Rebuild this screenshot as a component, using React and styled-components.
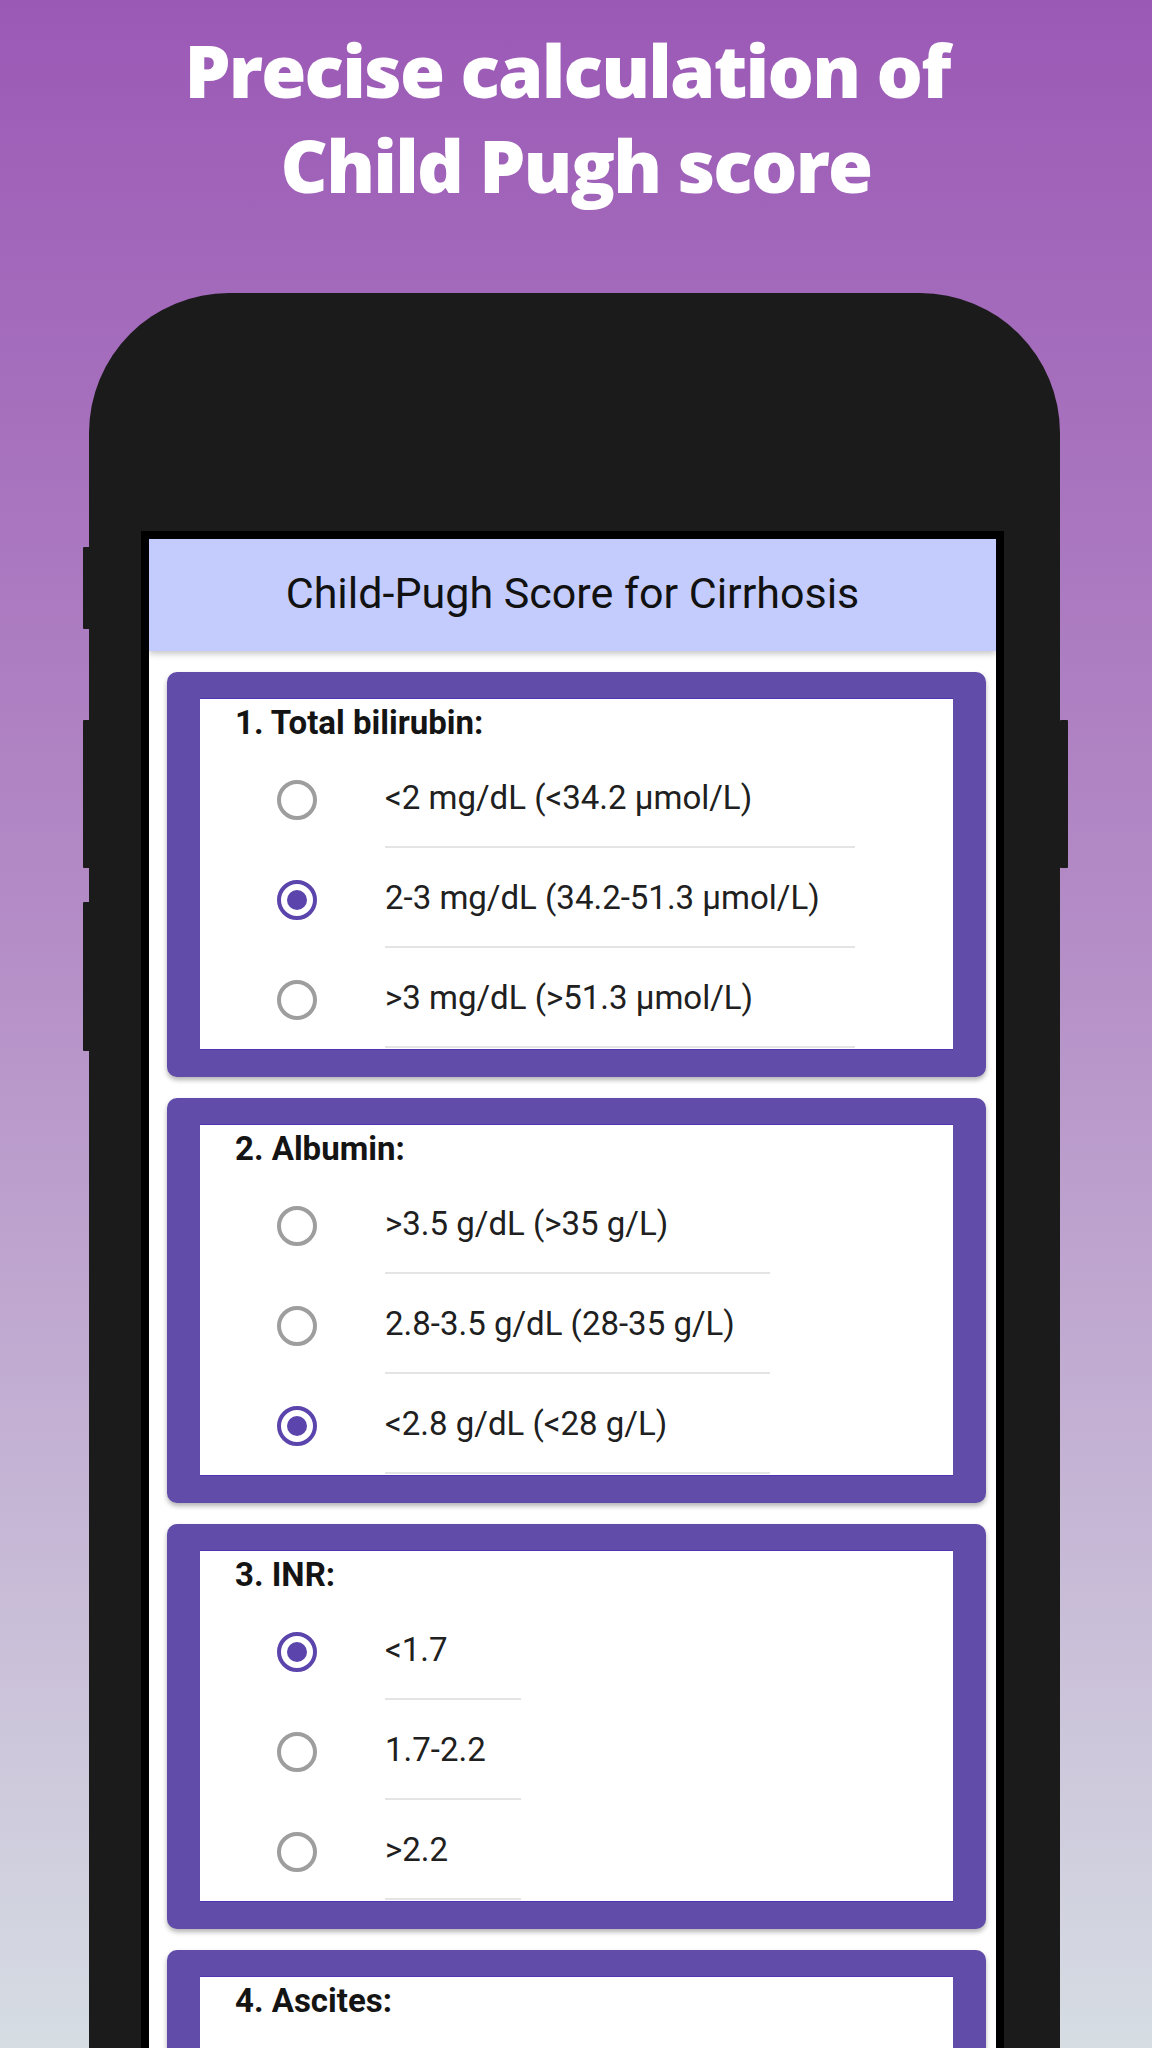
import React from 'react';
import styled, { createGlobalStyle } from 'styled-components';

const GlobalStyle = createGlobalStyle`
  html, body {
    margin: 0;
    padding: 0;
  }
  body {
    font-family: Roboto, 'Liberation Sans', sans-serif;
  }
  * {
    box-sizing: border-box;
  }
`;

const questions = [
  {
    title: '1. Total bilirubin:',
    options: ['<2 mg/dL (<34.2 μmol/L)', '2-3 mg/dL (34.2-51.3 μmol/L)', '>3 mg/dL (>51.3 μmol/L)'],
    selected: 1,
  },
  {
    title: '2. Albumin:',
    options: ['>3.5 g/dL (>35 g/L)', '2.8-3.5 g/dL (28-35 g/L)', '<2.8 g/dL (<28 g/L)'],
    selected: 2,
  },
  {
    title: '3. INR:',
    options: ['<1.7', '1.7-2.2', '>2.2'],
    selected: 0,
  },
  {
    title: '4. Ascites:',
    options: ['Absent', 'Slight', 'Moderate'],
    selected: -1,
  },
];

function App() {
  return (
    <Page>
      <GlobalStyle />
      <Headline>
        <HeadLine shift={18}>Precise calculation of</HeadLine>
        <HeadLine>Child Pugh score</HeadLine>
      </Headline>
      <Phone>
        <SideButton side="left" top={254} height={82} />
        <SideButton side="left" top={427} height={148} />
        <SideButton side="left" top={609} height={149} />
        <SideButton side="right" top={427} height={148} />
        <Screen>
          <AppBar>Child-Pugh Score for Cirrhosis</AppBar>
          <Content>
            {questions.map((q) => (
              <Card key={q.title}>
                <CardBody>
                  <QuestionTitle>{q.title}</QuestionTitle>
                  <OptionGroup>
                    {q.options.map((opt, i) => (
                      <React.Fragment key={opt}>
                        <RadioCell>
                          <Radio checked={i === q.selected} />
                        </RadioCell>
                        <OptionLabel>{opt}</OptionLabel>
                      </React.Fragment>
                    ))}
                  </OptionGroup>
                </CardBody>
              </Card>
            ))}
          </Content>
        </Screen>
      </Phone>
    </Page>
  );
}

const Page = styled.div`
  height: 2048px;
  overflow: hidden;
  display: flex;
  flex-direction: column;
  background: linear-gradient(180deg, #9b59b6 0%, #b48cc6 45%, #d6dde3 100%);
`;

const Headline = styled.h1`
  margin: 0;
  padding-top: 22px;
  display: flex;
  flex-direction: column;
  align-items: center;
  font-family: 'Open Sans', 'Noto Sans', sans-serif;
  font-weight: 800;
  font-size: 73px;
  line-height: 95px;
  letter-spacing: -1.8px;
  color: #ffffff;
`;

const HeadLine = styled.span`
  padding-right: ${(p) => p.shift || 0}px;
`;

const Phone = styled.div`
  position: relative;
  flex: 1;
  display: flex;
  flex-direction: column;
  width: 971px;
  margin: 81px 0 0 89px;
  padding: 238px 56px 0 52px;
  background: #1b1b1b;
  border-radius: 140px 140px 0 0;
`;

const SideButton = styled.div`
  position: absolute;
  top: ${(p) => p.top}px;
  height: ${(p) => p.height}px;
  width: 8px;
  ${(p) => (p.side === 'left' ? 'left: -6px;' : 'right: -8px;')}
  background: #1b1b1b;
  border-radius: 1px;
`;

const Screen = styled.div`
  flex: 1;
  display: flex;
  flex-direction: column;
  border: 8px solid #000;
  border-bottom: none;
  background: #ffffff;
`;

const AppBar = styled.div`
  position: relative;
  z-index: 1;
  height: 112px;
  display: flex;
  align-items: center;
  justify-content: center;
  background: #c3ccfd;
  box-shadow: 0 3px 6px rgba(0, 0, 0, 0.22);
  font-family: Roboto, 'Liberation Sans', sans-serif;
  font-size: 43px;
  color: #111111;
  padding-bottom: 4px;
`;

const Content = styled.div`
  padding: 21px 10px 0 18px;
`;

const Card = styled.div`
  background: #614caa;
  border-radius: 10px;
  padding: 26px 33px 27px;
  margin-bottom: 21px;
  box-shadow: 0 3px 5px rgba(0, 0, 0, 0.3);
`;

const CardBody = styled.div`
  background: #ffffff;
  padding: 4px 0 1px 35px;
  border-top: 1px solid #5233b0;
  border-bottom: 1px solid #5233b0;
`;

const QuestionTitle = styled.div`
  font-family: Roboto, 'Liberation Sans', sans-serif;
  font-weight: 700;
  font-size: 33px;
  line-height: 40px;
  color: #141414;
`;

const OptionGroup = styled.div`
  display: inline-grid;
  grid-template-columns: 40px max-content;
  column-gap: 68px;
  margin: 5px 0 0 42px;
`;

const RadioCell = styled.div`
  display: flex;
  align-items: center;
  height: 100px;
  padding-top: 3px;
`;

const Radio = styled.span`
  display: flex;
  align-items: center;
  justify-content: center;
  width: 40px;
  height: 40px;
  border-radius: 50%;
  border: 4px solid ${(p) => (p.checked ? '#5b45ad' : '#9e9e9e')};

  &::after {
    content: '';
    width: 20px;
    height: 20px;
    border-radius: 50%;
    background: ${(p) => (p.checked ? '#5b45ad' : 'transparent')};
  }
`;

const OptionLabel = styled.div`
  display: flex;
  align-items: center;
  height: 100px;
  padding-right: 35px;
  border-bottom: 2px solid #e4e4e4;
  font-family: Roboto, 'Liberation Sans', sans-serif;
  font-size: 33px;
  color: #202020;
`;

export default App;
